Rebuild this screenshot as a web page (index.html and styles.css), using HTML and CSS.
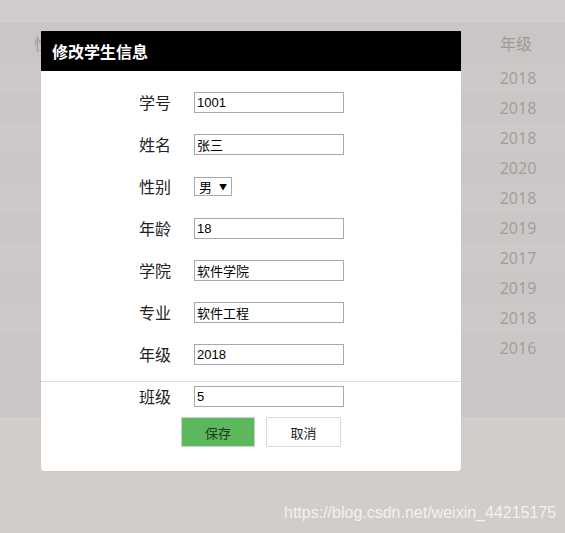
FILE: index.html
```html
<!DOCTYPE html>
<html lang="zh">
<head>
<meta charset="utf-8">
<title>修改学生信息</title>
<link rel="stylesheet" href="styles.css">
</head>
<body>
<div class="page">
  <div class="topband"></div>
  <div class="table">
    <div class="thead">
      <span class="th th-sex">性别</span>
      <span class="th th-grade">年级</span>
    </div>
    <div class="tr"><span class="td">2018</span></div>
    <div class="tr alt"><span class="td">2018</span></div>
    <div class="tr"><span class="td">2018</span></div>
    <div class="tr alt"><span class="td">2020</span></div>
    <div class="tr"><span class="td">2018</span></div>
    <div class="tr alt"><span class="td">2019</span></div>
    <div class="tr"><span class="td">2017</span></div>
    <div class="tr alt"><span class="td">2019</span></div>
    <div class="tr"><span class="td">2018</span></div>
    <div class="tr alt"><span class="td">2016</span></div>
    <div class="tfoot"></div>
  </div>

  <div class="modal">
    <div class="modal-header">修改学生信息</div>
    <div class="modal-body">
      <div class="row"><label class="lbl">学号</label><input class="inp" value="1001"></div>
      <div class="row"><label class="lbl">姓名</label><input class="inp" value="张三"></div>
      <div class="row"><label class="lbl">性别</label><div class="sel"><span class="sel-val">男</span><span class="sel-arrow">▼</span></div></div>
      <div class="row"><label class="lbl">年龄</label><input class="inp" value="18"></div>
      <div class="row"><label class="lbl">学院</label><input class="inp" value="软件学院"></div>
      <div class="row"><label class="lbl">专业</label><input class="inp" value="软件工程"></div>
      <div class="row row-last"><label class="lbl">年级</label><input class="inp" value="2018"></div>
      <div class="divider"></div>
      <div class="row row-class"><label class="lbl">班级</label><input class="inp" value="5"></div>
      <div class="actions">
        <button class="btn btn-save">保存</button>
        <button class="btn btn-cancel">取消</button>
      </div>
    </div>
  </div>

  <div class="watermark">https://blog.csdn.net/weixin_44215175</div>
</div>
</body>
</html>
```
FILE: styles.css
```css
html, body {
  margin: 0;
  padding: 0;
}
body {
  width: 565px;
  height: 533px;
  overflow: hidden;
  background: #d0cdcb;
  font-family: "Noto Sans CJK SC", sans-serif;
}
.page {
  position: relative;
  width: 565px;
  height: 533px;
}
.topband {
  height: 23px;
  background: #cfcccb;
}
.table {
  background: #ccc8c7;
}
.thead {
  height: 40px;
  background: #cac6c5;
  display: flex;
  align-items: center;
  font-family: "Noto Sans CJK SC", sans-serif;
  font-size: 16px;
  color: #9e9998;
}
.th-sex {
  margin-left: 34px;
}
.th-grade {
  margin-left: auto;
  width: 130px;
  text-align: center;
  margin-right: -16px;
}
.tr {
  height: 30px;
  display: flex;
  align-items: center;
  justify-content: flex-end;
  background: #cdc9c8;
}
.tr.alt {
  background: #cbc7c6;
}
.td {
  width: 130px;
  text-align: center;
  margin-right: -18px;
  font-family: "Open Sans", sans-serif;
  font-size: 16px;
  color: #a19c9b;
}
.tfoot {
  height: 54px;
  background: #cbc7c6;
}

.modal {
  position: absolute;
  left: 41px;
  top: 31px;
  width: 420px;
  height: 440px;
  background: #fff;
  border-radius: 0 0 4px 4px;
  overflow: hidden;
}
.modal-header {
  height: 40px;
  line-height: 40px;
  background: #000;
  color: #fff;
  font-weight: bold;
  font-size: 16px;
  padding-left: 11px;
}
.modal-body {
  padding-top: 21px;
  display: flex;
  flex-direction: column;
}
.row {
  display: flex;
  align-items: center;
  height: 21px;
  margin-bottom: 21px;
}
.row-last {
  margin-bottom: 16px;
}
.divider {
  height: 1px;
  background: #dcdcdc;
}
.row-class {
  margin-top: 4px;
  margin-bottom: 10px;
}
.lbl {
  width: 130px;
  text-align: right;
  margin-right: 23px;
  font-size: 16px;
  color: #222;
  line-height: 21px;
}
.inp {
  box-sizing: border-box;
  width: 150px;
  height: 21px;
  margin: 0;
  border: 1px solid #a9a9a9;
  padding: 0 2px;
  font-family: "Liberation Sans", "Noto Sans CJK SC", sans-serif;
  font-size: 13px;
  color: #000;
  outline: none;
}
.sel {
  box-sizing: border-box;
  width: 38px;
  height: 19px;
  border: 1px solid #a9a9a9;
  display: flex;
  align-items: center;
  padding-left: 4px;
  font-size: 13px;
  color: #000;
}
.sel-val {
  line-height: 17px;
}
.sel-arrow {
  font-size: 8px;
  margin-left: 7px;
  line-height: 17px;
}
.actions {
  display: flex;
  gap: 11px;
  padding-left: 140px;
}
.btn {
  box-sizing: border-box;
  width: 74px;
  height: 30px;
  margin: 0;
  padding: 0;
  font-family: "Noto Sans CJK SC", sans-serif;
  font-size: 13px;
  color: #222;
  border-radius: 0;
}
.btn-save {
  background: #5cb85c;
  border: 1px solid #c8d8c8;
  color: #1f3a1f;
}
.btn-cancel {
  width: 75px;
  background: #fff;
  border: 1px solid #dcdcdc;
}
.watermark {
  position: absolute;
  left: 284px;
  top: 504px;
  font-family: "Liberation Sans", sans-serif;
  font-size: 16px;
  color: rgba(255, 255, 255, 0.75);
  white-space: nowrap;
}
```
